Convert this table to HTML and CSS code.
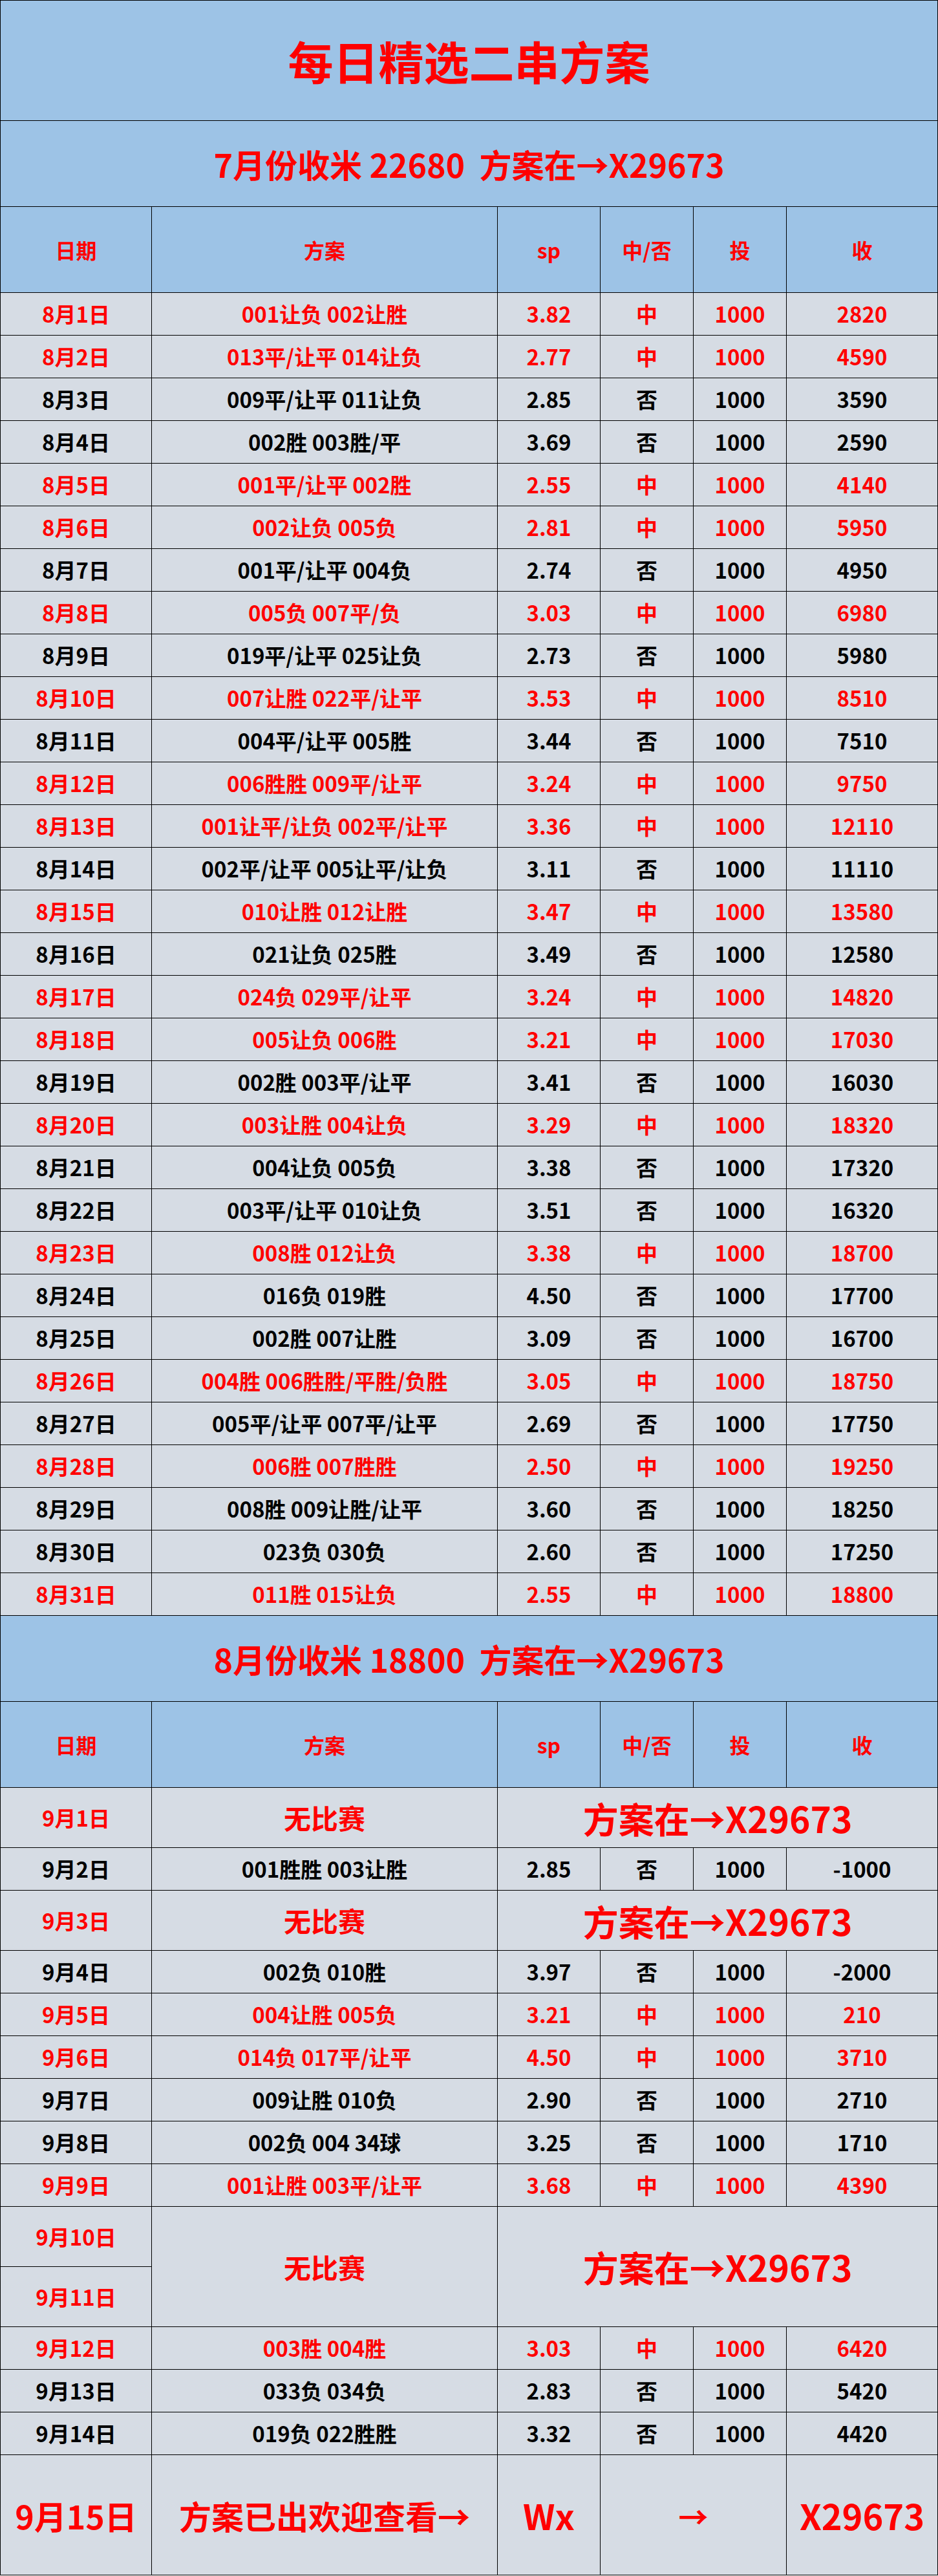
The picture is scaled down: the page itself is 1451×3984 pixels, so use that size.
FILE: index.html
```html
<!DOCTYPE html>
<html lang="zh-CN">
<head>
<meta charset="utf-8">
<title>每日精选二串方案</title>
<link rel="stylesheet" href="styles.css">
</head>
<body>
<table class="sheet">
  <colgroup>
    <col class="c-date"><col class="c-plan"><col class="c-sp"><col class="c-hit"><col class="c-bet"><col class="c-gain">
  </colgroup>
  <tbody>
    <tr class="r-title"><td colspan="6" class="blue title">每日精选二串方案</td></tr>
    <tr class="r-sub"><td colspan="6" class="blue sub">7月份收米 22680&nbsp; 方案在→X29673</td></tr>
    <tr class="r-head blue head"><td>日期</td><td>方案</td><td>sp</td><td>中/否</td><td>投</td><td>收</td></tr>

    <tr class="row red"><td>8月1日</td><td>001让负 002让胜</td><td>3.82</td><td>中</td><td>1000</td><td>2820</td></tr>
    <tr class="row red"><td>8月2日</td><td>013平/让平 014让负</td><td>2.77</td><td>中</td><td>1000</td><td>4590</td></tr>
    <tr class="row"><td>8月3日</td><td>009平/让平 011让负</td><td>2.85</td><td>否</td><td>1000</td><td>3590</td></tr>
    <tr class="row"><td>8月4日</td><td>002胜 003胜/平</td><td>3.69</td><td>否</td><td>1000</td><td>2590</td></tr>
    <tr class="row red"><td>8月5日</td><td>001平/让平 002胜</td><td>2.55</td><td>中</td><td>1000</td><td>4140</td></tr>
    <tr class="row red"><td>8月6日</td><td>002让负 005负</td><td>2.81</td><td>中</td><td>1000</td><td>5950</td></tr>
    <tr class="row"><td>8月7日</td><td>001平/让平 004负</td><td>2.74</td><td>否</td><td>1000</td><td>4950</td></tr>
    <tr class="row red"><td>8月8日</td><td>005负 007平/负</td><td>3.03</td><td>中</td><td>1000</td><td>6980</td></tr>
    <tr class="row"><td>8月9日</td><td>019平/让平 025让负</td><td>2.73</td><td>否</td><td>1000</td><td>5980</td></tr>
    <tr class="row red"><td>8月10日</td><td>007让胜 022平/让平</td><td>3.53</td><td>中</td><td>1000</td><td>8510</td></tr>
    <tr class="row"><td>8月11日</td><td>004平/让平 005胜</td><td>3.44</td><td>否</td><td>1000</td><td>7510</td></tr>
    <tr class="row red"><td>8月12日</td><td>006胜胜 009平/让平</td><td>3.24</td><td>中</td><td>1000</td><td>9750</td></tr>
    <tr class="row red"><td>8月13日</td><td>001让平/让负 002平/让平</td><td>3.36</td><td>中</td><td>1000</td><td>12110</td></tr>
    <tr class="row"><td>8月14日</td><td>002平/让平 005让平/让负</td><td>3.11</td><td>否</td><td>1000</td><td>11110</td></tr>
    <tr class="row red"><td>8月15日</td><td>010让胜 012让胜</td><td>3.47</td><td>中</td><td>1000</td><td>13580</td></tr>
    <tr class="row"><td>8月16日</td><td>021让负 025胜</td><td>3.49</td><td>否</td><td>1000</td><td>12580</td></tr>
    <tr class="row red"><td>8月17日</td><td>024负 029平/让平</td><td>3.24</td><td>中</td><td>1000</td><td>14820</td></tr>
    <tr class="row red"><td>8月18日</td><td>005让负 006胜</td><td>3.21</td><td>中</td><td>1000</td><td>17030</td></tr>
    <tr class="row"><td>8月19日</td><td>002胜 003平/让平</td><td>3.41</td><td>否</td><td>1000</td><td>16030</td></tr>
    <tr class="row red"><td>8月20日</td><td>003让胜 004让负</td><td>3.29</td><td>中</td><td>1000</td><td>18320</td></tr>
    <tr class="row"><td>8月21日</td><td>004让负 005负</td><td>3.38</td><td>否</td><td>1000</td><td>17320</td></tr>
    <tr class="row"><td>8月22日</td><td>003平/让平 010让负</td><td>3.51</td><td>否</td><td>1000</td><td>16320</td></tr>
    <tr class="row red"><td>8月23日</td><td>008胜 012让负</td><td>3.38</td><td>中</td><td>1000</td><td>18700</td></tr>
    <tr class="row"><td>8月24日</td><td>016负 019胜</td><td>4.50</td><td>否</td><td>1000</td><td>17700</td></tr>
    <tr class="row"><td>8月25日</td><td>002胜 007让胜</td><td>3.09</td><td>否</td><td>1000</td><td>16700</td></tr>
    <tr class="row red"><td>8月26日</td><td>004胜 006胜胜/平胜/负胜</td><td>3.05</td><td>中</td><td>1000</td><td>18750</td></tr>
    <tr class="row"><td>8月27日</td><td>005平/让平 007平/让平</td><td>2.69</td><td>否</td><td>1000</td><td>17750</td></tr>
    <tr class="row red"><td>8月28日</td><td>006胜 007胜胜</td><td>2.50</td><td>中</td><td>1000</td><td>19250</td></tr>
    <tr class="row"><td>8月29日</td><td>008胜 009让胜/让平</td><td>3.60</td><td>否</td><td>1000</td><td>18250</td></tr>
    <tr class="row"><td>8月30日</td><td>023负 030负</td><td>2.60</td><td>否</td><td>1000</td><td>17250</td></tr>
    <tr class="row red"><td>8月31日</td><td>011胜 015让负</td><td>2.55</td><td>中</td><td>1000</td><td>18800</td></tr>

    <tr class="r-sub"><td colspan="6" class="blue sub">8月份收米 18800&nbsp; 方案在→X29673</td></tr>
    <tr class="r-head blue head"><td>日期</td><td>方案</td><td>sp</td><td>中/否</td><td>投</td><td>收</td></tr>

    <tr class="row-tall red"><td>9月1日</td><td class="none">无比赛</td><td colspan="4" class="promo">方案在→X29673</td></tr>
    <tr class="row"><td>9月2日</td><td>001胜胜 003让胜</td><td>2.85</td><td>否</td><td>1000</td><td>-1000</td></tr>
    <tr class="row-tall red"><td>9月3日</td><td class="none">无比赛</td><td colspan="4" class="promo">方案在→X29673</td></tr>
    <tr class="row"><td>9月4日</td><td>002负 010胜</td><td>3.97</td><td>否</td><td>1000</td><td>-2000</td></tr>
    <tr class="row red"><td>9月5日</td><td>004让胜 005负</td><td>3.21</td><td>中</td><td>1000</td><td>210</td></tr>
    <tr class="row red"><td>9月6日</td><td>014负 017平/让平</td><td>4.50</td><td>中</td><td>1000</td><td>3710</td></tr>
    <tr class="row"><td>9月7日</td><td>009让胜 010负</td><td>2.90</td><td>否</td><td>1000</td><td>2710</td></tr>
    <tr class="row"><td>9月8日</td><td>002负 004 34球</td><td>3.25</td><td>否</td><td>1000</td><td>1710</td></tr>
    <tr class="row red"><td>9月9日</td><td>001让胜 003平/让平</td><td>3.68</td><td>中</td><td>1000</td><td>4390</td></tr>
    <tr class="row-tall red"><td>9月10日</td><td rowspan="2" class="none">无比赛</td><td rowspan="2" colspan="4" class="promo">方案在→X29673</td></tr>
    <tr class="row-tall red"><td>9月11日</td></tr>
    <tr class="row red"><td>9月12日</td><td>003胜 004胜</td><td>3.03</td><td>中</td><td>1000</td><td>6420</td></tr>
    <tr class="row"><td>9月13日</td><td>033负 034负</td><td>2.83</td><td>否</td><td>1000</td><td>5420</td></tr>
    <tr class="row"><td>9月14日</td><td>019负 022胜胜</td><td>3.32</td><td>否</td><td>1000</td><td>4420</td></tr>
    <tr class="row-final red"><td>9月15日</td><td>方案已出欢迎查看→</td><td class="big">Wx</td><td colspan="2" class="arrow">→</td><td class="big">X29673</td></tr>
  </tbody>
</table>
</body>
</html>
```
FILE: styles.css
```css
html, body {
  margin: 0;
  padding: 0;
  background: #ffffff;
}

.sheet {
  border-collapse: collapse;
  table-layout: fixed;
  width: 1450px;
  font-family: "Noto Sans CJK SC", "Noto Sans", sans-serif;
  font-weight: 700;
  color: #000000;
}

.c-date { width: 234px; }
.c-plan { width: 535px; }
.c-sp   { width: 159px; }
.c-hit  { width: 144px; }
.c-bet  { width: 144px; }
.c-gain { width: 234px; }

.sheet td {
  border: 1px solid #000000;
  padding: 0;
  text-align: center;
  vertical-align: middle;
  white-space: nowrap;
  background: #d6dce4;
  font-size: 33px;
  line-height: 1;
}

.sheet tr.blue td,
.sheet td.blue {
  background: #9dc3e6;
}

.r-title { height: 186px; }
.r-sub   { height: 133px; }
.r-head  { height: 133px; }
.row     { height: 66px; }
.row-tall { height: 93px; }
.row-final { height: 186px; }

.sheet td.title {
  font-size: 70px;
  color: #ff0000;
}

.sheet td.sub {
  font-size: 50px;
  color: #ff0000;
}

.sheet tr.head td {
  font-size: 32px;
  color: #ff0000;
}

.sheet tr.red td {
  color: #ff0000;
}

.sheet td.none {
  font-size: 42px;
}

.sheet td.promo {
  font-size: 55px;
}

.sheet tr.row-final td {
  font-size: 50px;
}

.sheet tr.row-final td.big {
  font-size: 54px;
}

.sheet tr.row-final td.arrow {
  font-size: 46px;
}
```
